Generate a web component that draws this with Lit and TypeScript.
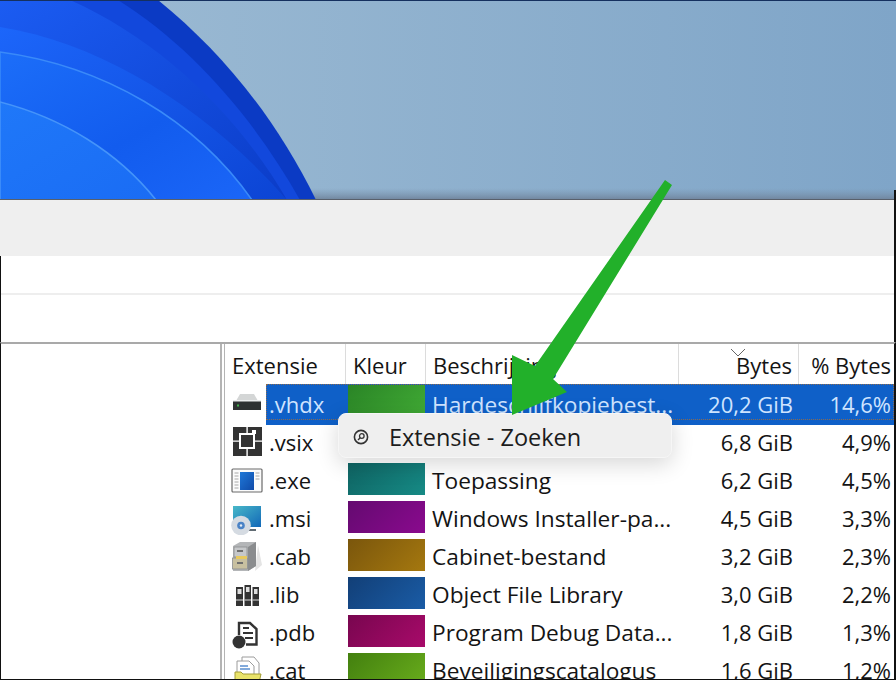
import { LitElement, css, html, svg } from "lit";
import { customElement } from "lit/decorators.js";

type Row = { ext: string; icon: string; color: string; desc: string; size: string; pct: string };

const rows: Row[] = [
  { ext: ".vhdx", icon: "disk", color: "linear-gradient(135deg,#2a8426,#41ab35)", desc: "Hardeschijfkopiebest...", size: "20,2 GiB", pct: "14,6%" },
  { ext: ".vsix", icon: "vsix", color: "#fff", desc: "", size: "6,8 GiB", pct: "4,9%" },
  { ext: ".exe", icon: "exe", color: "linear-gradient(135deg,#0f6463,#168a85)", desc: "Toepassing", size: "6,2 GiB", pct: "4,5%" },
  { ext: ".msi", icon: "msi", color: "linear-gradient(135deg,#640a70,#8a0a8e)", desc: "Windows Installer-pa...", size: "4,5 GiB", pct: "3,3%" },
  { ext: ".cab", icon: "cab", color: "linear-gradient(135deg,#7a560c,#a5780f)", desc: "Cabinet-bestand", size: "3,2 GiB", pct: "2,3%" },
  { ext: ".lib", icon: "lib", color: "linear-gradient(135deg,#123f77,#1a5ca6)", desc: "Object File Library", size: "3,0 GiB", pct: "2,2%" },
  { ext: ".pdb", icon: "pdb", color: "linear-gradient(135deg,#78064f,#a80a6a)", desc: "Program Debug Data...", size: "1,8 GiB", pct: "1,3%" },
  { ext: ".cat", icon: "cat", color: "linear-gradient(135deg,#43800f,#68ac1c)", desc: "Beveiligingscatalogus", size: "1,6 GiB", pct: "1,2%" },
];

const icons: Record<string, unknown> = {
  disk: svg`
    <path d="M5 12 L9 5 H23 L27 12 Z" fill="#d4d6d6"/>
    <rect x="2" y="12" width="28" height="9" fill="#2e3232"/>
    <rect x="2" y="11" width="28" height="1.5" fill="#eceeee"/>
    <rect x="6" y="15.5" width="2" height="2" fill="#3fae4a"/>`,
  vsix: svg`
    <rect x="2" y="1" width="29" height="29" fill="#333"/>
    <path d="M9 8 H23 V22 H9 Z" fill="none" stroke="#fff" stroke-width="2"/>
    <path d="M15.4 1 h1.4 v6 h-1.4 Z M15.4 23 h1.4 v7 h-1.4 Z M2 14.4 h6 v1.4 h-6 Z M24 14.4 h7 v1.4 h-7 Z" fill="#fff"/>
    <rect x="21" y="4" width="4" height="4" fill="#fff"/>`,
  exe: svg`
    <rect x="1" y="4" width="30" height="23" rx="1" fill="#fbfbfb" stroke="#6a6a6a" stroke-width="1.2"/>
    <rect x="9" y="7" width="14" height="18" fill="url(#exeBlue)"/>
    <path d="M3.5 8 H7.5 M3.5 11 H7.5 M3.5 14 H7.5 M3.5 17 H7.5 M3.5 20 H7.5 M3.5 23 H7.5 M24.5 8 H28.5 M24.5 11 H28.5 M24.5 14 H28.5" stroke="#a8a8a8" stroke-width="1"/>`,
  msi: svg`
    <rect x="2" y="3" width="28" height="21" fill="url(#msiBlue)"/>
    <path d="M16 27 H25" stroke="#2d3a44" stroke-width="1.5"/>
    <circle cx="10" cy="22.5" r="9.8" fill="#d5dbe2"/>
    <circle cx="10" cy="22.5" r="3.8" fill="#4b83c6"/>
    <circle cx="10" cy="22.5" r="1.2" fill="#e8eef5"/>`,
  cab: svg`
    <path d="M27 4 L31 24 L24 30 Z" fill="#e4e4e4"/>
    <path d="M2 5 L9 1 H25 V25 L17 30 H2 Z" fill="#b4b6b8"/>
    <path d="M17 6 L25 1 V25 L17 30 Z" fill="#8a8c8e"/>
    <rect x="3" y="6" width="13" height="10" fill="#c6c8ca" stroke="#8b8d8f" stroke-width="0.8"/>
    <rect x="1.5" y="17" width="15" height="11" fill="#c8c0a0" stroke="#8b8d8f" stroke-width="0.8"/>
    <rect x="5" y="15" width="11" height="3" fill="#e8c95e"/>
    <rect x="6" y="21" width="6" height="2" fill="#6f6f6f"/>
    <rect x="6" y="9" width="6" height="2" fill="#6f6f6f"/>`,
  lib: svg`
    <path d="M5 8 H12 V27 H5 Z M13.5 6 H20 V27 H13.5 Z M21.5 8 H28 V27 H21.5 Z" fill="#333"/>
    <path d="M6.5 10 H10.5 V15 H6.5 Z M15 8 H18.5 V13 H15 Z M23 10 H26.5 V15 H23 Z" fill="#ddd"/>
    <path d="M5 21 H12 M13.5 21 H20 M21.5 21 H28" stroke="#ddd" stroke-width="1"/>`,
  pdb: svg`
    <path d="M8 18 V6 H19 L25.5 12 V27.5 H15" fill="none" stroke="#333" stroke-width="2.4"/>
    <path d="M12 11 H18 M12 16 H22 M14 21 H22" stroke="#333" stroke-width="2.2"/>
    <circle cx="8" cy="25" r="6.5" fill="#333"/>`,
  cat: svg`
    <path d="M11 2 H23 L28 8 V20 H11 Z" fill="#fff" stroke="#9c9c9c"/>
    <path d="M6 6 H18 L23 11 V24 H6 Z" fill="#fff" stroke="#9c9c9c"/>
    <path d="M9 11 H17 M9 14 H19" stroke="#5a8fcf" stroke-width="1.5"/>
    <path d="M4 17 L10 17 L12 19 H30 L28 28 H4 Z" fill="#e9e36a" stroke="#a39c35"/>`,
};

@customElement("app-root")
export class AppRoot extends LitElement {
  static styles = css`
    :host {
      display: block;
      width: 896px;
      height: 680px;
      position: relative;
      overflow: hidden;
      background: #fff;
      font-family: "Open Sans", "Noto Sans", sans-serif;
      color: #141414;
    }
    .wall {
      display: block;
      width: 896px;
      height: 200px;
    }
    .band {
      height: 56px;
      box-sizing: border-box;
      background: #efefef;
      border-right: 2px solid #111;
    }
    .tools {
      height: 86px;
      box-sizing: border-box;
      border-left: 1px solid #111;
      border-right: 2px solid #111;
      display: flex;
      flex-direction: column;
    }
    .tools .a {
      height: 37px;
      border-bottom: 2px solid #eeeeee;
    }
    .main {
      height: 338px;
      box-sizing: border-box;
      display: flex;
      border-top: 2px solid #a9a9a9;
      border-left: 1px solid #111;
      border-right: 2px solid #111;
      border-bottom: 1px solid #111;
    }
    .left {
      width: 219px;
      flex: none;
    }
    .split {
      width: 5px;
      flex: none;
      box-sizing: border-box;
      border-left: 2px solid #b4b4b4;
      border-right: 1px solid #b4b4b4;
    }
    .list {
      flex: 1;
      min-width: 0;
      overflow: hidden;
    }
    .row {
      display: grid;
      grid-template-columns: 121px 80px 253px 120px 1fr;
      height: 38px;
      font-size: 22px;
      line-height: 40px;
      white-space: nowrap;
      position: relative;
    }
    .head {
      height: 40px;
      line-height: 43px;
    }
    .head > div {
      box-sizing: border-box;
      border-right: 1px solid #dcdcdc;
      padding-left: 7px;
    }
    .head > div.num {
      padding-left: 0;
      padding-right: 6px;
      text-align: right;
      position: relative;
    }
    .head > div.num:last-child {
      border-right: 0;
      padding-right: 3px;
    }
    .chev {
      position: absolute;
      left: 51px;
      top: 4px;
      width: 16px;
      height: 9px;
    }
    .ext {
      display: flex;
      align-items: center;
    }
    .ext svg {
      width: 32px;
      height: 32px;
      margin-left: 6px;
      flex: none;
    }
    .ext span {
      flex: 1;
      padding-left: 3px;
      align-self: stretch;
      margin-left: 3px;
    }
    .swatch {
      padding: 3px 1px 3px 2px;
    }
    .swatch i {
      display: block;
      height: 32px;
    }
    .desc {
      padding-left: 6px;
      font-size: 22.7px;
      line-height: 41px;
    }
    .num {
      text-align: right;
      padding-right: 6px;
    }
    .row > .num:last-child {
      padding-right: 3px;
    }
    .sel {
      color: #cfe4ff;
    }
    .sel .ext span,
    .sel .swatch,
    .sel .desc,
    .sel .num {
      background: #0f60c8;
    }
    .sel .swatch {
      padding: 1px 1px 1px 2px;
    }
    .sel::after {
      content: "";
      position: absolute;
      left: 41px;
      right: 0;
      top: 0;
      bottom: 2px;
      border: 1px dotted #8a6a50;
      pointer-events: none;
    }
    .menu {
      position: absolute;
      left: 338px;
      top: 413px;
      width: 334px;
      height: 45px;
      box-sizing: border-box;
      background: #efefef;
      border: 1px solid #f6f6f6;
      border-radius: 8px;
      box-shadow: 0 6px 22px rgba(0, 0, 0, 0.16);
      display: flex;
      align-items: center;
      gap: 20px;
      padding: 2px 0 0 14px;
      font-size: 23.5px;
      color: #1c1c1c;
    }
    .menu svg {
      width: 16px;
      height: 16px;
      flex: none;
    }
    .arrow {
      position: absolute;
      left: 0;
      top: 0;
      width: 896px;
      height: 680px;
      pointer-events: none;
    }
  `;

  render() {
    return html`
      <svg class="wall" viewBox="0 0 896 200" preserveAspectRatio="none">
        <defs>
          <linearGradient id="sky" x1="0" y1="0" x2="1" y2="0">
            <stop offset="0" stop-color="#9ebcd4" />
            <stop offset="1" stop-color="#7fa5c8" />
          </linearGradient>
          <linearGradient id="skyEdge" x1="0" y1="0" x2="0" y2="1">
            <stop offset="0" stop-color="#7c96b0" stop-opacity="0" />
            <stop offset="1" stop-color="#6f839b" />
          </linearGradient>
          <linearGradient id="l1" x1="0" y1="0" x2="1" y2="1">
            <stop offset="0" stop-color="#1b5cf2" />
            <stop offset="1" stop-color="#0b3cc8" />
          </linearGradient>
          <linearGradient id="l2" x1="0" y1="0" x2="1" y2="1">
            <stop offset="0" stop-color="#1c66fa" />
            <stop offset="1" stop-color="#0c44d4" />
          </linearGradient>
          <linearGradient id="l3" x1="0" y1="0" x2="1" y2="1">
            <stop offset="0" stop-color="#1c6ef9" />
            <stop offset="0.55" stop-color="#125cee" />
            <stop offset="1" stop-color="#1b66f8" />
          </linearGradient>
          <linearGradient id="l4" x1="0" y1="0" x2="1" y2="1">
            <stop offset="0" stop-color="#1f78f9" />
            <stop offset="1" stop-color="#1a6cf4" />
          </linearGradient>
          <linearGradient id="exeBlue" x1="0" y1="0" x2="1" y2="1">
            <stop offset="0" stop-color="#1f78d8" />
            <stop offset="1" stop-color="#0f4aa8" />
          </linearGradient>
          <linearGradient id="msiBlue" x1="0" y1="0" x2="1" y2="1">
            <stop offset="0" stop-color="#48b8c8" />
            <stop offset="1" stop-color="#1268b8" />
          </linearGradient>
        </defs>
        <rect width="896" height="200" fill="url(#sky)" />
        <rect y="188" width="896" height="12" fill="url(#skyEdge)" />
        <path d="M0 0 H158 C222 52 276 118 316 200 H0 Z" fill="#0b3ac4" />
        <path d="M0 0 H118 C190 45 254 118 300 200 H0 Z" fill="#1248dc" />
        <path d="M0 0 H70 C160 40 238 115 287 200 H0 Z" fill="url(#l1)" />
        <path d="M0 27 C106 44 210 112 287 200 H0 Z" fill="url(#l2)" />
        <path d="M0 52 C104 66 196 120 252 200 H0 Z" fill="url(#l3)" stroke="#3a8af9" stroke-width="1.5" />
        <path d="M0 102 C62 118 118 152 156 200 H0 Z" fill="url(#l4)" stroke="#4594fa" stroke-width="1.5" />
        <rect width="896" height="1" fill="#15305f" />
        <rect y="199" width="896" height="1" fill="#59606b" />
        <rect x="894" y="190" width="2" height="10" fill="#111" />
      </svg>
      <div class="band"></div>
      <div class="tools"><div class="a"></div></div>
      <div class="main">
        <div class="left"></div>
        <div class="split"></div>
        <div class="list">
          <div class="row head">
            <div>Extensie</div>
            <div>Kleur</div>
            <div>Beschrijving</div>
            <div class="num">
              <svg class="chev" viewBox="0 0 16 9"><path d="M1 1 L8 8 L15 1" fill="none" stroke="#666" stroke-width="1" /></svg>
              Bytes
            </div>
            <div class="num">% Bytes</div>
          </div>
          ${rows.map(
            (r, i) => html`
              <div class="row ${i === 0 ? "sel" : ""}">
                <div class="ext">
                  <svg viewBox="0 0 32 32">${icons[r.icon]}</svg>
                  <span>${r.ext}</span>
                </div>
                <div class="swatch"><i style="background:${r.color}"></i></div>
                <div class="desc">${r.desc}</div>
                <div class="num">${r.size}</div>
                <div class="num">${r.pct}</div>
              </div>
            `,
          )}
        </div>
      </div>
      <div class="menu">
        <svg viewBox="0 0 16 16">
          <circle cx="8" cy="8" r="6.6" fill="none" stroke="#333" stroke-width="1.6" />
          <circle cx="8.8" cy="7" r="2.3" fill="none" stroke="#333" stroke-width="1.3" />
          <path d="M7.2 8.8 L5 11" stroke="#333" stroke-width="1.4" />
        </svg>
        <span>Extensie - Zoeken</span>
      </div>
      <svg class="arrow" viewBox="0 0 896 680">
        <path
          d="M665 180 L672 185 L553 379 L567 392 L512 415 L512 355 L535 366 Z"
          fill="#22b02a"
        />
      </svg>
    `;
  }
}
